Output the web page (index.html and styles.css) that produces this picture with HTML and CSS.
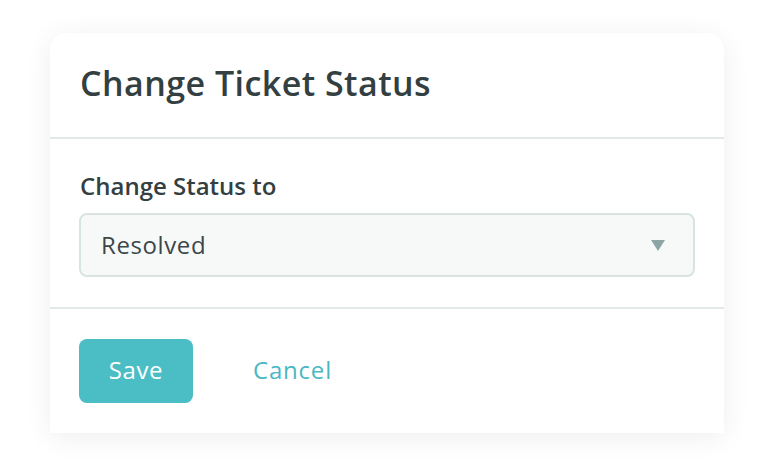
FILE: index.html
```html
<!DOCTYPE html>
<html>
<head>
<meta charset="utf-8">
<link rel="stylesheet" href="styles.css">
</head>
<body>
<div class="card">
  <div class="card-header">
    <h1 class="title">Change Ticket Status</h1>
  </div>
  <div class="card-body">
    <label class="label">Change Status to</label>
    <div class="select">
      <span class="select-value">Resolved</span>
      <svg class="caret" width="14" height="11" viewBox="0 0 14 11"><path d="M0 0H14L7 11Z" fill="#8ea5a7"/></svg>
    </div>
  </div>
  <div class="card-footer">
    <button class="btn-save">Save</button>
    <button class="btn-cancel">Cancel</button>
  </div>
</div>
</body>
</html>
```
FILE: styles.css
```css
html, body {
  margin: 0;
  padding: 0;
  background: #ffffff;
  font-family: "Open Sans", Lato, sans-serif;
}
body {
  padding: 33px 50px 32px 50px;
}
.card {
  width: 674px;
  background: #ffffff;
  border-radius: 16px 16px 0 0;
  box-shadow: 0 4px 28px rgba(0, 0, 0, 0.07);
}
.card-header {
  box-sizing: border-box;
  height: 106px;
  padding: 30px 30px 0 30px;
  border-bottom: 2px solid #e3e9e8;
}
.title {
  margin: 0;
  font-size: 34px;
  line-height: 40px;
  font-weight: 600;
  letter-spacing: 0.45px;
  color: #333f41;
}
.card-body {
  padding: 32px 29px 30px 29px;
  border-bottom: 2px solid #e3e9e8;
}
.label {
  display: block;
  margin-left: 1px;
  font-size: 24px;
  line-height: 30px;
  font-weight: 600;
  color: #333f41;
  margin-bottom: 12px;
}
.select {
  box-sizing: border-box;
  height: 64px;
  border: 2px solid #d9e3e2;
  border-radius: 8px;
  background: #f7f9f9;
  display: flex;
  align-items: center;
  justify-content: space-between;
  padding: 0 28px 2px 20px;
}
.select-value {
  font-size: 24px;
  letter-spacing: 0.6px;
  color: #3c4749;
}
.caret {
  display: block;
  margin-top: 2px;
}
.card-footer {
  padding: 30px 29px 30px 29px;
  display: flex;
  align-items: center;
  gap: 60px;
}
.btn-save {
  width: 114px;
  height: 64px;
  border: none;
  border-radius: 8px;
  background: #4bbdc5;
  color: #ffffff;
  padding: 0 0 4px 0;
  font-family: "Open Sans", Lato, sans-serif;
  font-size: 24px;
  letter-spacing: 0.6px;
  font-weight: 400;
  cursor: pointer;
}
.btn-cancel {
  border: none;
  background: none;
  padding: 0 0 4px 0;
  color: #4bb8c3;
  font-family: "Open Sans", Lato, sans-serif;
  font-size: 24px;
  letter-spacing: 0.8px;
  font-weight: 400;
  cursor: pointer;
}
```
